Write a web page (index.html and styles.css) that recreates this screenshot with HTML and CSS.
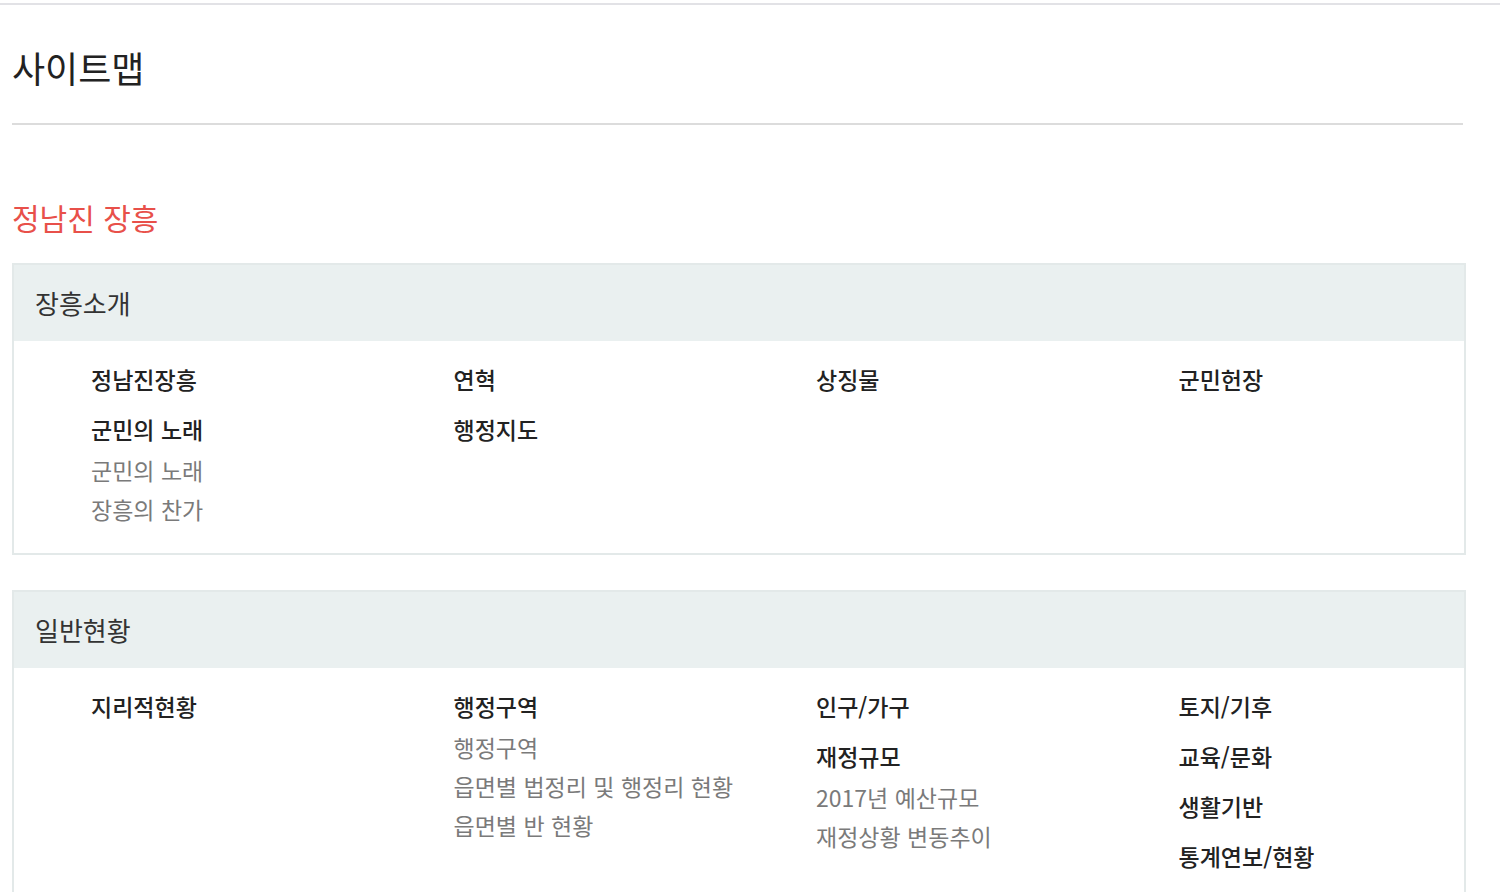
FILE: index.html
```html
<!DOCTYPE html>
<html lang="ko">
<head>
<meta charset="utf-8">
<title>사이트맵</title>
<link rel="stylesheet" href="styles.css">
</head>
<body>
<div class="topbar"></div>
<div class="page">
  <div class="page-head">
    <h1 class="page-title">사이트맵</h1>
  </div>
  <h2 class="site-title">정남진 장흥</h2>

  <section class="group">
    <h3 class="group-head">장흥소개</h3>
    <div class="group-body">
      <ul class="col">
        <li class="item"><span class="item-name">정남진장흥</span></li>
        <li class="item"><span class="item-name">군민의 노래</span>
          <ul class="sub">
            <li>군민의 노래</li>
            <li>장흥의 찬가</li>
          </ul>
        </li>
      </ul>
      <ul class="col">
        <li class="item"><span class="item-name">연혁</span></li>
        <li class="item"><span class="item-name">행정지도</span></li>
      </ul>
      <ul class="col">
        <li class="item"><span class="item-name">상징물</span></li>
      </ul>
      <ul class="col">
        <li class="item"><span class="item-name">군민헌장</span></li>
      </ul>
    </div>
  </section>

  <section class="group">
    <h3 class="group-head">일반현황</h3>
    <div class="group-body">
      <ul class="col">
        <li class="item"><span class="item-name">지리적현황</span></li>
      </ul>
      <ul class="col">
        <li class="item"><span class="item-name">행정구역</span>
          <ul class="sub">
            <li>행정구역</li>
            <li>읍면별 법정리 및 행정리 현황</li>
            <li>읍면별 반 현황</li>
          </ul>
        </li>
      </ul>
      <ul class="col">
        <li class="item"><span class="item-name">인구/가구</span></li>
        <li class="item"><span class="item-name">재정규모</span>
          <ul class="sub">
            <li>2017년 예산규모</li>
            <li>재정상황 변동추이</li>
          </ul>
        </li>
      </ul>
      <ul class="col">
        <li class="item"><span class="item-name">토지/기후</span></li>
        <li class="item"><span class="item-name">교육/문화</span></li>
        <li class="item"><span class="item-name">생활기반</span></li>
        <li class="item"><span class="item-name">통계연보/현황</span></li>
        <li class="item"><span class="item-name">주요통계</span></li>
      </ul>
    </div>
  </section>
</div>
</body>
</html>
```

FILE: styles.css
```css
* { box-sizing: border-box; }
html, body { margin: 0; padding: 0; background: #fff; }
body {
  font-family: "Noto Sans CJK KR", "Noto Sans", sans-serif;
  color: #222;
}
.topbar {
  height: 5px;
  border-bottom: 2px solid #e2e2e6;
}
.page {
  padding: 0 34px 0 12px;
}
.page-head {
  width: 1451px;
  border-bottom: 2px solid #dcdcdc;
  padding: 35px 0 29px;
}
.page-title {
  margin: 0;
  font-size: 36px;
  line-height: 54px;
  font-weight: 400;
  color: #222;
}
.site-title {
  margin: 70px 0 24px;
  font-size: 30px;
  line-height: 44px;
  font-weight: 400;
  color: #e8504a;
}
.group {
  border: 2px solid #e3e9e9;
  margin-bottom: 35px;
}
.group-head {
  margin: 0;
  height: 76px;
  line-height: 76px;
  padding-left: 21px;
  background: #eaf0f0;
  font-size: 26px;
  font-weight: 400;
  color: #333;
}
.group-body {
  display: grid;
  grid-template-columns: repeat(4, 1fr);
  padding: 23px 0 4px;
}
.col {
  list-style: none;
  margin: 0;
  padding: 0 0 0 77px;
}
.item {
  margin-bottom: 20px;
}
.item-name {
  display: block;
  font-size: 23px;
  line-height: 30px;
  font-weight: 500;
  color: #222;
}
.sub {
  list-style: none;
  margin: 7px 0 0;
  padding: 0;
}
.sub li {
  font-size: 23px;
  line-height: 39px;
  color: #7a7a7a;
}
```
